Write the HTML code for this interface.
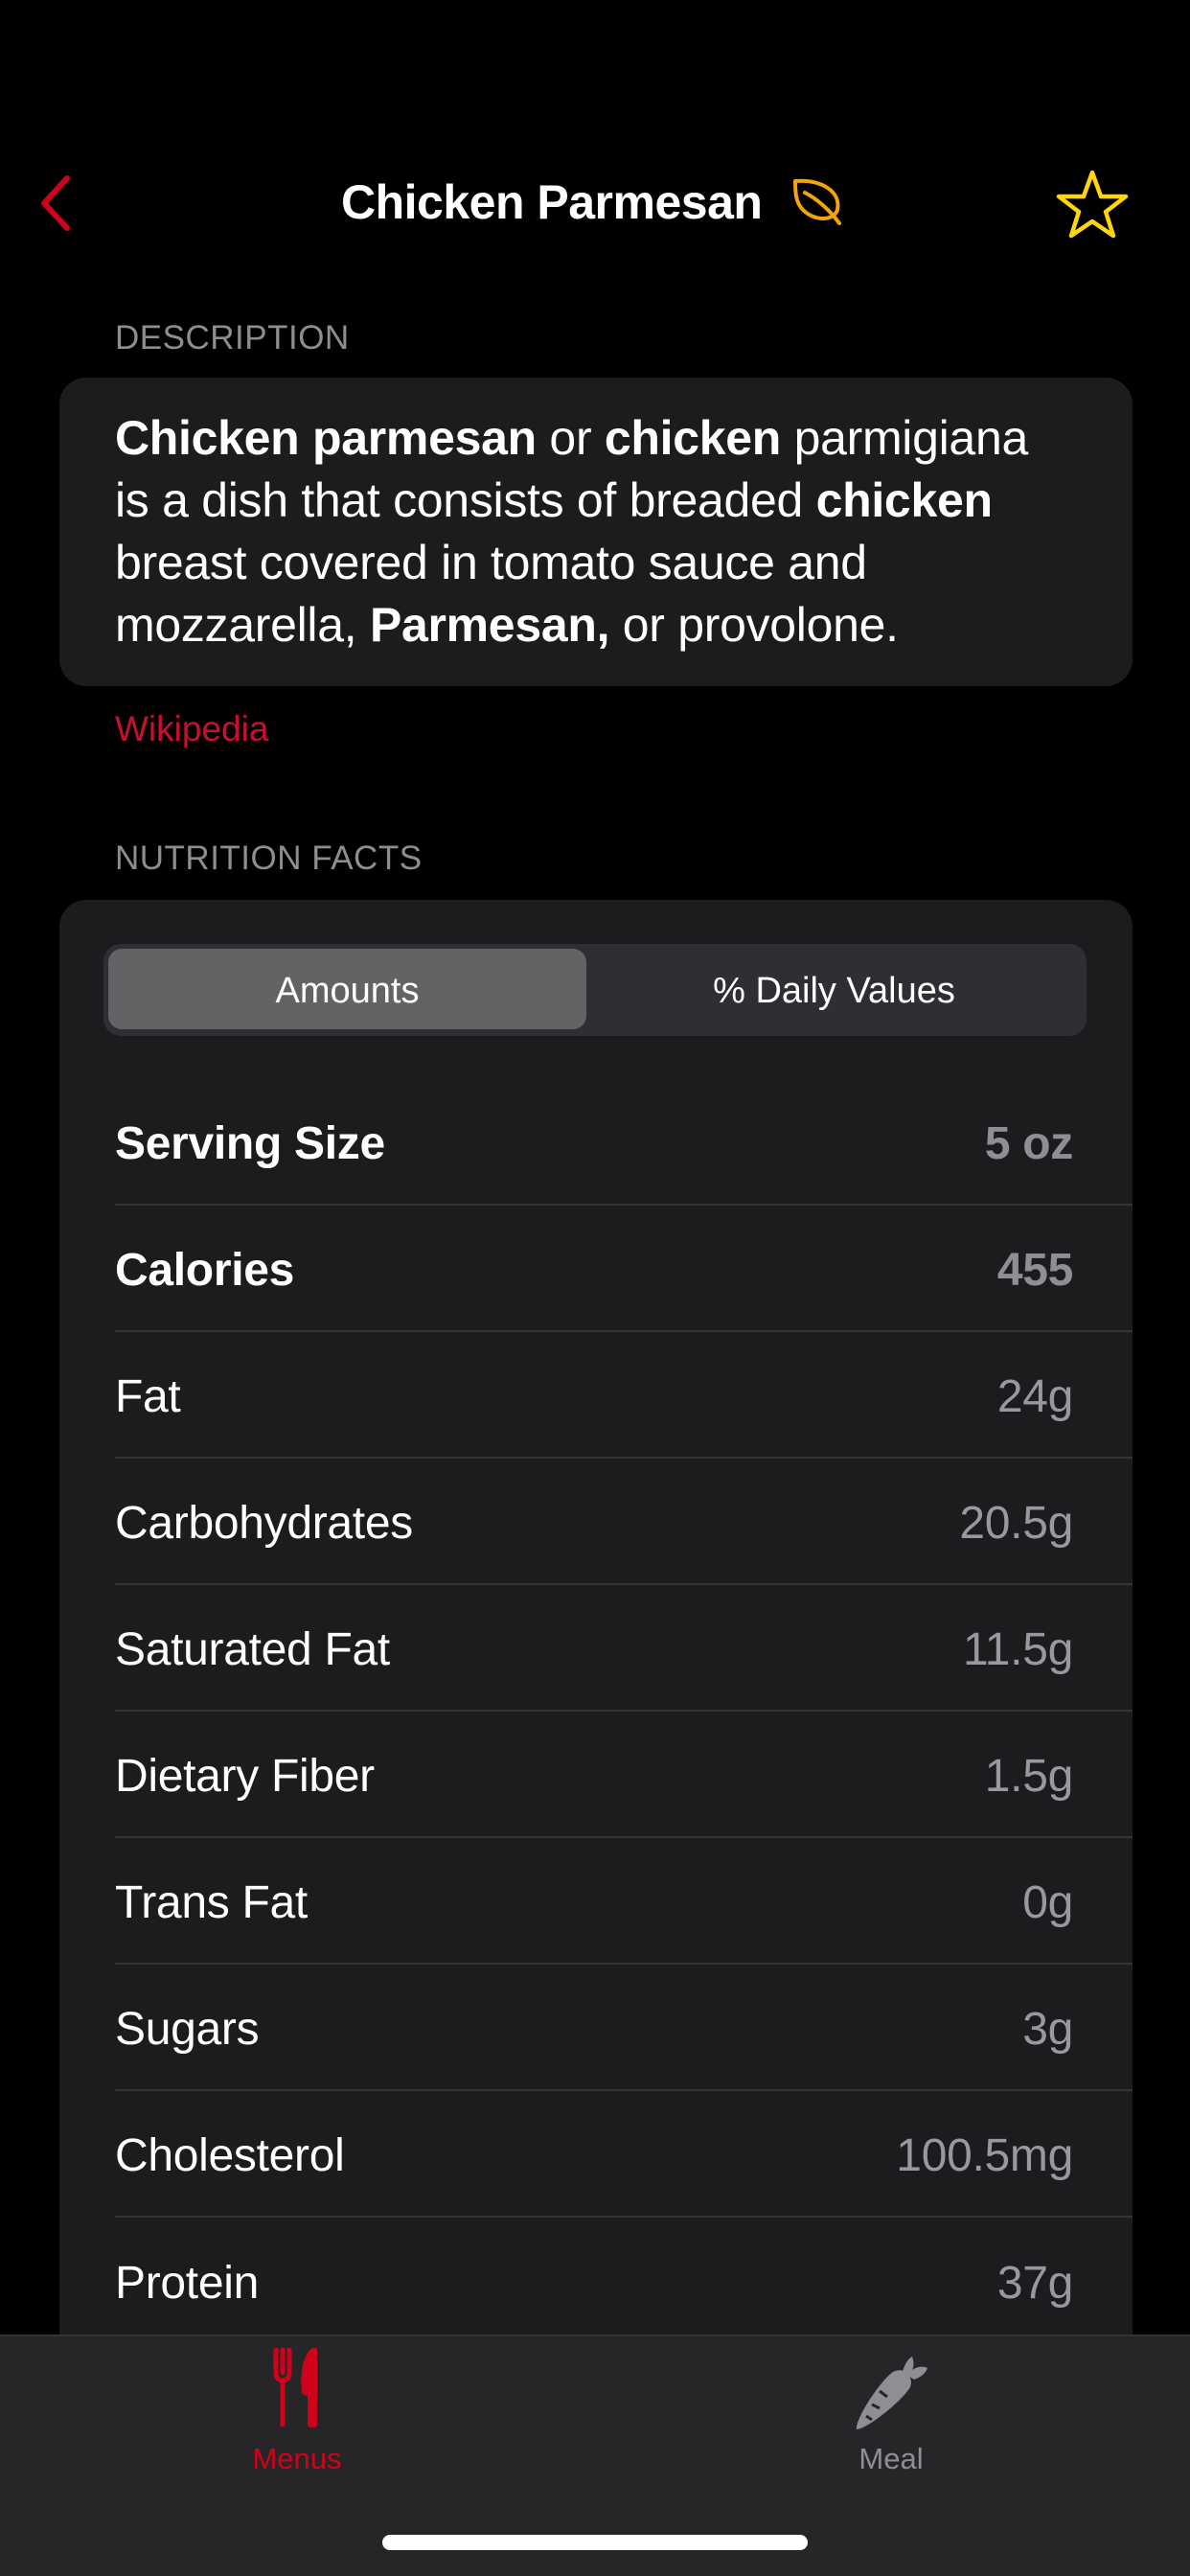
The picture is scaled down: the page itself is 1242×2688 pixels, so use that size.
<!DOCTYPE html>
<html><head><meta charset="utf-8"><style>
*{margin:0;padding:0;box-sizing:border-box}
body{width:1242px;height:2688px;background:#000;position:relative;overflow:hidden;font-family:"Liberation Sans",sans-serif;color:#fff}
.abs{position:absolute}
.hdr{font-size:35px;color:#8d8d92;letter-spacing:0.5px}
.card{background:#1c1c1e;border-radius:28px;left:62px;width:1120px}
.desc{left:120px;top:425px;font-size:50px;line-height:65px;letter-spacing:-0.3px;white-space:nowrap}
.row{position:absolute;left:120px;width:1062px;height:132px;border-bottom:2px solid #343436;display:flex;align-items:center;justify-content:space-between;padding-right:62px;font-size:48px;letter-spacing:-0.3px;padding-top:4px}
.row .v{color:#98989d}
.row.b{font-weight:bold}
.row.b .v{color:#8e8e93}
</style></head><body>
<svg class="abs" style="left:36px;top:182px" width="44" height="60" viewBox="0 0 44 60"><path d="M34 4 L10 30 L34 56" fill="none" stroke="#d0021b" stroke-width="6" stroke-linecap="round" stroke-linejoin="round"/></svg>
<div class="abs" style="left:356px;top:182px;font-size:50px;font-weight:bold;letter-spacing:-0.5px">Chicken Parmesan</div>
<svg class="abs" style="left:826px;top:185px" width="56" height="52" viewBox="0 0 56 52"><path d="M4 4 C30 2 52 14 48 34 C44 46 24 46 12 34 C4 26 4 14 4 4 Z M14 16 C26 22 40 34 50 48" fill="none" stroke="#f5a30a" stroke-width="4" stroke-linecap="round" stroke-linejoin="round"/></svg>
<svg class="abs" style="left:1102px;top:176px" width="76" height="74" viewBox="0 0 76 74"><path d="M38 4 L47 29 L73 29 L52 45 L60 70 L38 55 L16 70 L24 45 L3 29 L29 29 Z" fill="none" stroke="#ffd60a" stroke-width="4.5" stroke-linejoin="round"/></svg>
<div class="abs hdr" style="left:120px;top:333px">DESCRIPTION</div>
<div class="abs card" style="top:394px;height:322px"></div>
<div class="abs desc"><b>Chicken parmesan</b> or <b>chicken</b> parmigiana<br>is a dish that consists of breaded <b>chicken</b><br>breast covered in tomato sauce and<br>mozzarella, <b>Parmesan,</b> or provolone.</div>
<div class="abs" style="left:120px;top:740px;font-size:37px;color:#c8102e">Wikipedia</div>
<div class="abs hdr" style="left:120px;top:876px">NUTRITION FACTS</div>
<div class="abs card" style="top:939px;height:1600px"></div>
<div class="abs" style="left:108px;top:985px;width:1026px;height:96px;background:#2f2f33;border-radius:18px"></div>
<div class="abs" style="left:113px;top:990px;width:499px;height:84px;background:#636366;border-radius:14px;display:flex;align-items:center;justify-content:center;font-size:38px;padding-top:4px">Amounts</div>
<div class="abs" style="left:612px;top:990px;width:517px;height:84px;display:flex;align-items:center;justify-content:center;font-size:38px;padding-top:4px">% Daily Values</div>
<div class="row b" style="top:1126px"><span>Serving Size</span><span class="v">5 oz</span></div>
<div class="row b" style="top:1258px"><span>Calories</span><span class="v">455</span></div>
<div class="row" style="top:1390px"><span>Fat</span><span class="v">24g</span></div>
<div class="row" style="top:1522px"><span>Carbohydrates</span><span class="v">20.5g</span></div>
<div class="row" style="top:1654px"><span>Saturated Fat</span><span class="v">11.5g</span></div>
<div class="row" style="top:1786px"><span>Dietary Fiber</span><span class="v">1.5g</span></div>
<div class="row" style="top:1918px"><span>Trans Fat</span><span class="v">0g</span></div>
<div class="row" style="top:2050px"><span>Sugars</span><span class="v">3g</span></div>
<div class="row" style="top:2182px"><span>Cholesterol</span><span class="v">100.5mg</span></div>
<div class="row" style="top:2314px;border-bottom:none"><span>Protein</span><span class="v">37g</span></div>
<div class="abs" style="left:0;top:2436px;width:1242px;height:252px;background:#262628;border-top:2px solid #333335"></div>
<svg class="abs" style="left:284px;top:2450px" width="54" height="84" viewBox="0 0 54 84"><path d="M4 2 V26 C4 32 8 34 11 34 V80 M11 2 V26 M18 2 V26 C18 32 14 34 11 34" fill="none" stroke="#d0021b" stroke-width="5" stroke-linecap="round"/><path d="M44 2 C34 10 32 30 34 46 L40 48 V80 M44 2 V80" fill="#d0021b" stroke="#d0021b" stroke-width="6" stroke-linecap="round" stroke-linejoin="round"/></svg>
<div class="abs" style="left:230px;top:2548px;width:160px;text-align:center;font-size:31px;color:#d0021b">Menus</div>
<svg class="abs" style="left:888px;top:2455px" width="84" height="84" viewBox="0 0 84 84"><path d="M6 80 C4 70 30 30 44 20 C56 14 66 24 62 36 C52 52 16 80 6 80 Z" fill="#8e8e93"/><path d="M54 20 C56 12 60 6 64 4 C66 10 66 14 64 18 C70 14 76 14 80 16 C78 22 72 26 66 28 Z" fill="#8e8e93"/><path d="M30 40 L38 46 M22 54 L30 58 M16 66 L22 70" stroke="#262628" stroke-width="3"/></svg>
<div class="abs" style="left:850px;top:2548px;width:160px;text-align:center;font-size:31px;color:#8e8e93">Meal</div>
<div class="abs" style="left:399px;top:2645px;width:444px;height:16px;background:#fff;border-radius:8px"></div>
</body></html>
